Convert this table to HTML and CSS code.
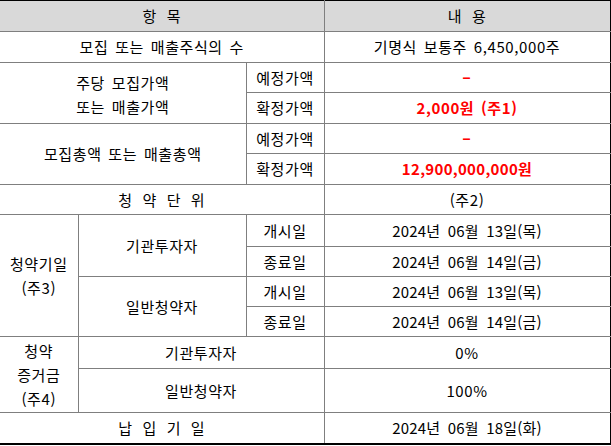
FILE: index.html
```html
<!DOCTYPE html>
<html lang="ko">
<head>
<meta charset="utf-8">
<link rel="stylesheet" href="styles.css">
</head>
<body>
<table class="grid">
  <colgroup>
    <col class="c1"><col class="c2"><col class="c3"><col class="c4">
  </colgroup>
  <tr class="h31 head">
    <th colspan="3" class="spaced">항 목</th>
    <th class="spaced">내 용</th>
  </tr>
  <tr class="h31">
    <td colspan="3">모집 또는 매출주식의 수</td>
    <td>기명식 보통주 6,450,000주</td>
  </tr>
  <tr class="h30">
    <td colspan="2" rowspan="2" class="multi">주당 모집가액<br>또는 매출가액</td>
    <td>예정가액</td>
    <td class="red"><span class="dash">-</span></td>
  </tr>
  <tr class="h31">
    <td>확정가액</td>
    <td class="red">2,000원 (주1)</td>
  </tr>
  <tr class="h30">
    <td colspan="2" rowspan="2">모집총액 또는 매출총액</td>
    <td>예정가액</td>
    <td class="red"><span class="dash">-</span></td>
  </tr>
  <tr class="h31">
    <td>확정가액</td>
    <td class="red num">12,900,000,000원</td>
  </tr>
  <tr class="h30">
    <td colspan="3" class="spaced">청 약 단 위</td>
    <td>(주2)</td>
  </tr>
  <tr class="h32">
    <td rowspan="4">청약기일<br>(주3)</td>
    <td rowspan="2">기관투자자</td>
    <td>개시일</td>
    <td class="date">2024년 06월 13일(목)</td>
  </tr>
  <tr class="h30">
    <td>종료일</td>
    <td class="date">2024년 06월 14일(금)</td>
  </tr>
  <tr class="h30">
    <td rowspan="2">일반청약자</td>
    <td>개시일</td>
    <td class="date">2024년 06월 13일(목)</td>
  </tr>
  <tr class="h30">
    <td>종료일</td>
    <td class="date">2024년 06월 14일(금)</td>
  </tr>
  <tr class="h32">
    <td rowspan="2">청약<br>증거금<br>(주4)</td>
    <td colspan="2">기관투자자</td>
    <td>0%</td>
  </tr>
  <tr class="h44">
    <td colspan="2">일반청약자</td>
    <td>100%</td>
  </tr>
  <tr class="h31 last">
    <td colspan="3" class="spaced">납 입 기 일</td>
    <td class="date">2024년 06월 18일(화)</td>
  </tr>
</table>
</body>
</html>
```

FILE: styles.css
```css
html, body {
  margin: 0;
  padding: 0;
  background: #ffffff;
}

.grid {
  border-collapse: collapse;
  table-layout: fixed;
  width: 610px;
  margin: 0;
  font-family: "Noto Sans CJK KR", "Noto Sans", sans-serif;
  font-size: 15px;
  color: #000000;
  border-top: 1px solid #000000;
  border-bottom: 2px solid #000000;
  border-right: 1px solid #000000;
}

.c1 { width: 78px; }
.c2 { width: 168px; }
.c3 { width: 78px; }
.c4 { width: 286px; }

.grid th,
.grid td {
  border: 1px solid #7f7f7f;
  padding: 0;
  text-align: center;
  vertical-align: middle;
  font-weight: 400;
  line-height: 24px;
  letter-spacing: 0.6px;
  word-spacing: 2px;
  white-space: nowrap;
}

.grid tr > :first-child {
  border-left: none;
}

.grid .head th {
  background: #d9d9d9;
  border-top: 1px solid #000000;
}

.grid .last td {
  border-bottom: 2px solid #000000;
}

.grid td:last-child,
.grid th:last-child {
  border-right: 1px solid #000000;
}

.grid .multi {
  padding-top: 4px;
}

.h30 { height: 30px; }
.h31 { height: 31px; }
.h32 { height: 32px; }
.h44 { height: 44px; }

.grid .red {
  color: #ff0000;
  font-weight: 700;
}

.grid .num {
  letter-spacing: 0.3px;
}

.grid .date {
  letter-spacing: 0.2px;
  word-spacing: 3px;
}

.dash {
  display: inline-block;
  transform: scaleX(1.7);
}

.grid .spaced {
  word-spacing: 5px;
}
```
